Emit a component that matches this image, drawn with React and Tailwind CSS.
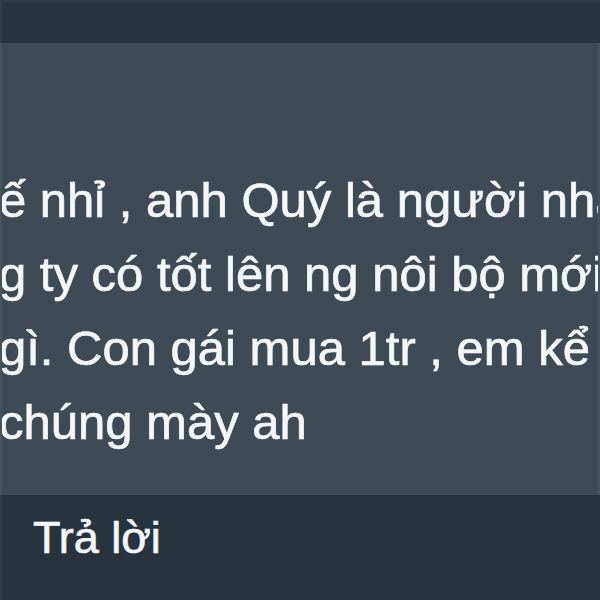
export default function App() {
  const lines = [
    'ế nhỉ , anh Quý là người nhà',
    'g ty có tốt lên ng nôi bộ mới',
    'gì. Con gái mua 1tr , em kể',
    'chúng mày ah',
  ]

  return (
    <div className="w-[600px] h-[600px] overflow-hidden bg-[#27333f] font-['Liberation_Sans',Arial,sans-serif] text-[#f4f6f8] [-webkit-text-stroke:0.7px_#f4f6f8]">
      <div className="h-[43px] bg-[#283541] border-t-2 border-l-2 border-[#303d49]" />

      <div className="h-[452px] bg-[#3e4a55] border-l-2 border-r-2 border-[#47535e] pt-[120px] overflow-hidden">
        {lines.map((line, i) => (
          <div key={i} className="whitespace-nowrap text-[49px] leading-[74px] -ml-[3px]">
            {line}
          </div>
        ))}
      </div>

      <div className="h-[105px] border-l-2 border-[#2f3b47] pl-[31px] pt-[15px]">
        <span className="text-[45px] leading-[56px]">Trả lời</span>
      </div>
    </div>
  )
}
